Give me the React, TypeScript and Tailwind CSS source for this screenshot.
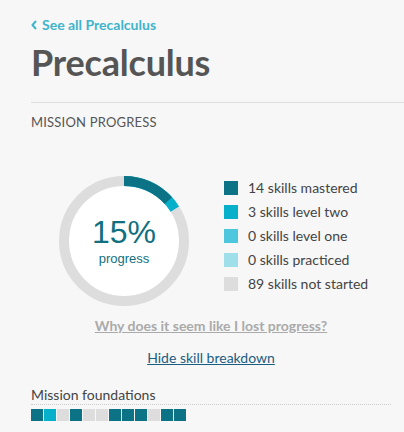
import React from "react";

const legend = [
  { color: "bg-[#0b7385]", label: "14 skills mastered" },
  { color: "bg-[#06b0cb]", label: "3 skills level two" },
  { color: "bg-[#4ec6dd]", label: "0 skills level one" },
  { color: "bg-[#9fdfea]", label: "0 skills practiced" },
  { color: "bg-[#dddddd]", label: "89 skills not started" },
];

const foundation = ["m", "t", "n", "m", "n", "n", "m", "m", "m", "n", "m", "m"];
const sq: Record<string, string> = {
  m: "bg-[#0b7385]",
  t: "bg-[#06b0cb]",
  n: "bg-[#dddddd]",
};

function Donut() {
  const r = 60;
  const c = 2 * Math.PI * r;
  const mastered = 14 / 106;
  const two = 3 / 106;
  return (
    <div className="relative w-[130px] h-[130px] shrink-0">
      <svg width="130" height="130" viewBox="0 0 130 130" className="-rotate-90">
        <circle cx="65" cy="65" r="55" fill="#ffffff" />
        <circle cx="65" cy="65" r={r} fill="none" stroke="#dddddd" strokeWidth="10" />
        <circle
          cx="65"
          cy="65"
          r={r}
          fill="none"
          stroke="#06b0cb"
          strokeWidth="10"
          strokeDasharray={`${c * (mastered + two)} ${c}`}
        />
        <circle
          cx="65"
          cy="65"
          r={r}
          fill="none"
          stroke="#0b7385"
          strokeWidth="10"
          strokeDasharray={`${c * mastered} ${c}`}
        />
      </svg>
      <div className="absolute inset-0 flex flex-col items-center justify-center text-[#11707f] font-['Liberation_Sans',Arial,sans-serif]">
        <div className="text-[32px] leading-none mt-[-2px]">15%</div>
        <div className="text-[13px] leading-none mt-[4px]">progress</div>
      </div>
    </div>
  );
}

export default function App() {
  return (
    <div className="min-h-[432px] w-[404px] bg-[#f7f7f7] font-['Lato',sans-serif] overflow-hidden">
      <div className="pl-[31px] pt-[15px]">
        <a className="flex items-center gap-[5px] text-[14px] font-bold text-[#3fb4cc] leading-[20px]">
          <svg width="6" height="10" viewBox="0 0 6 10">
            <path d="M5 1 L1.5 5 L5 9" fill="none" stroke="#3fb4cc" strokeWidth="2" />
          </svg>
          See all Precalculus
        </a>
        <h1 className="text-[36px] font-bold text-[#555555] leading-[44px] mt-[5px] tracking-[-0.2px]">
          Precalculus
        </h1>
        <div className="border-t border-[#dddddd] mt-[18px]" />
        <div className="pr-[13px]">
          <div className="text-[13px] text-[#555555] mt-[9px] leading-[20px] tracking-[0.2px]">
            MISSION PROGRESS
          </div>
          <div className="flex items-center mt-[44px] pl-[28px]">
            <Donut />
            <div className="ml-[35px] flex flex-col gap-[10px] mt-[-10px]">
              {legend.map((l) => (
                <div key={l.label} className="flex items-center h-[14px]">
                  <span className={`w-[14px] h-[14px] ${l.color}`} />
                  <span className="ml-[10px] text-[14px] text-[#444444] leading-none">{l.label}</span>
                </div>
              ))}
            </div>
          </div>
          <div className="flex flex-col items-center mt-[10px]">
            <a className="text-[14px] font-bold text-[#aaaaaa] underline leading-[20px]">
              Why does it seem like I lost progress?
            </a>
            <a className="text-[14px] text-[#1c5d82] underline leading-[20px] mt-[12px]">
              Hide skill breakdown
            </a>
          </div>
          <div className="mt-[18px] text-[14px] text-[#444444] leading-[18px]">Mission foundations</div>
          <div className="border-t border-dotted border-[#cccccc]" />
          <div className="flex gap-px mt-[4px]">
            {foundation.map((k, i) => (
              <span key={i} className={`w-[12px] h-[12px] ${sq[k]}`} />
            ))}
          </div>
        </div>
      </div>
    </div>
  );
}
